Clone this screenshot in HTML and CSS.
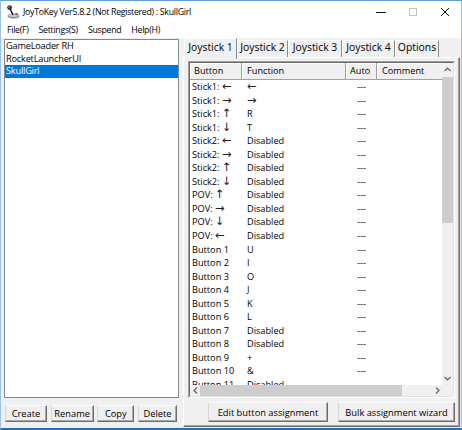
FILE: index.html
```html
<!DOCTYPE html>
<html>
<head>
<meta charset="utf-8">
<link rel="stylesheet" href="styles.css">
</head>
<body>
<div class="window">
  <div class="titlebar">
    <svg class="appicon" width="15" height="15" viewBox="0 0 15 15">
      <ellipse cx="8.5" cy="12" rx="6" ry="2.4" fill="#8a8a8a"/>
      <ellipse cx="8.5" cy="11.2" rx="5.2" ry="1.8" fill="#c9c9c9"/>
      <line x1="8" y1="11" x2="5" y2="4.5" stroke="#222" stroke-width="1.6"/>
      <circle cx="4.6" cy="3.6" r="2.4" fill="#333"/>
      <circle cx="4" cy="3" r="0.8" fill="#aaa"/>
      <rect x="10.5" y="9.3" width="2.2" height="1.4" fill="#333"/>
    </svg>
    <span class="title">JoyToKey Ver5.8.2 (Not Registered) : SkullGirl</span>
    <div class="caption">
      <span class="capbtn"><svg width="10" height="10" viewBox="0 0 10 10"><line x1="0" y1="5.5" x2="10" y2="5.5" stroke="#111" stroke-width="1"/></svg></span>
      <span class="capbtn"><svg width="10" height="10" viewBox="0 0 10 10"><rect x="1.5" y="1.5" width="7" height="7" fill="none" stroke="#c4c4c4" stroke-width="1"/></svg></span>
      <span class="capbtn"><svg width="10" height="10" viewBox="0 0 10 10"><path d="M1 1 L9 9 M9 1 L1 9" stroke="#111" stroke-width="1"/></svg></span>
    </div>
  </div>
  <div class="menubar">
    <span class="menuitem">File(F)</span>
    <span class="menuitem">Settings(S)</span>
    <span class="menuitem">Suspend</span>
    <span class="menuitem">Help(H)</span>
  </div>
  <div class="client">
    <div class="leftpane">
      <ul class="listbox">
        <li>GameLoader RH</li>
        <li>RocketLauncherUI</li>
        <li class="selected">SkullGirl</li>
      </ul>
      <div class="leftbtns">
        <button class="btn w-create">Create</button>
        <button class="btn w-rename">Rename</button>
        <button class="btn w-copy">Copy</button>
        <button class="btn w-delete">Delete</button>
      </div>
    </div>
    <div class="rightpane">
      <div class="tabs">
        <div class="tab active t1">Joystick 1</div>
        <div class="tab t2">Joystick 2</div>
        <div class="tab t3">Joystick 3</div>
        <div class="tab t4">Joystick 4</div>
        <div class="tab t5">Options</div>
      </div>
      <div class="panel">
        <div class="listview">
          <div class="lv-inner">
            <div class="lv-view">
              <div class="lv-header">
                <div class="hc c1">Button</div>
                <div class="hc c2">Function</div>
                <div class="hc c3">Auto</div>
                <div class="hc c4">Comment</div>
              </div>
              <div class="lv-rows">
                <div class="row"><span class="c1">Stick1: <span class="ar">←</span></span><span class="c2"><span class="ar">←</span></span><span class="c3">---</span></div>
                <div class="row"><span class="c1">Stick1: <span class="ar">→</span></span><span class="c2"><span class="ar">→</span></span><span class="c3">---</span></div>
                <div class="row"><span class="c1">Stick1: <span class="ar">↑</span></span><span class="c2">R</span><span class="c3">---</span></div>
                <div class="row"><span class="c1">Stick1: <span class="ar">↓</span></span><span class="c2">T</span><span class="c3">---</span></div>
                <div class="row"><span class="c1">Stick2: <span class="ar">←</span></span><span class="c2">Disabled</span><span class="c3">---</span></div>
                <div class="row"><span class="c1">Stick2: <span class="ar">→</span></span><span class="c2">Disabled</span><span class="c3">---</span></div>
                <div class="row"><span class="c1">Stick2: <span class="ar">↑</span></span><span class="c2">Disabled</span><span class="c3">---</span></div>
                <div class="row"><span class="c1">Stick2: <span class="ar">↓</span></span><span class="c2">Disabled</span><span class="c3">---</span></div>
                <div class="row"><span class="c1">POV: <span class="ar">↑</span></span><span class="c2">Disabled</span><span class="c3">---</span></div>
                <div class="row"><span class="c1">POV: <span class="ar">→</span></span><span class="c2">Disabled</span><span class="c3">---</span></div>
                <div class="row"><span class="c1">POV: <span class="ar">↓</span></span><span class="c2">Disabled</span><span class="c3">---</span></div>
                <div class="row"><span class="c1">POV: <span class="ar">←</span></span><span class="c2">Disabled</span><span class="c3">---</span></div>
                <div class="row"><span class="c1">Button 1</span><span class="c2">U</span><span class="c3">---</span></div>
                <div class="row"><span class="c1">Button 2</span><span class="c2">I</span><span class="c3">---</span></div>
                <div class="row"><span class="c1">Button 3</span><span class="c2">O</span><span class="c3">---</span></div>
                <div class="row"><span class="c1">Button 4</span><span class="c2">J</span><span class="c3">---</span></div>
                <div class="row"><span class="c1">Button 5</span><span class="c2">K</span><span class="c3">---</span></div>
                <div class="row"><span class="c1">Button 6</span><span class="c2">L</span><span class="c3">---</span></div>
                <div class="row"><span class="c1">Button 7</span><span class="c2">Disabled</span><span class="c3">---</span></div>
                <div class="row"><span class="c1">Button 8</span><span class="c2">Disabled</span><span class="c3">---</span></div>
                <div class="row"><span class="c1">Button 9</span><span class="c2">+</span><span class="c3">---</span></div>
                <div class="row"><span class="c1">Button 10</span><span class="c2">&amp;</span><span class="c3">---</span></div>
                <div class="row"><span class="c1">Button 11</span><span class="c2">Disabled</span><span class="c3">---</span></div>
              </div>
            </div>
            <div class="vscroll">
              <div class="sarrow v"><svg width="7" height="5" viewBox="0 0 7 5"><polyline points="0.5,4 3.5,1 6.5,4" fill="none" stroke="#606060" stroke-width="1.2"/></svg></div>
              <div class="vthumb"></div>
              <div class="vtrack"></div>
              <div class="sarrow v"><svg width="7" height="5" viewBox="0 0 7 5"><polyline points="0.5,1 3.5,4 6.5,1" fill="none" stroke="#606060" stroke-width="1.2"/></svg></div>
            </div>
            <div class="hscroll">
              <div class="sarrow h"><svg width="5" height="7" viewBox="0 0 5 7"><polyline points="4,0.5 1,3.5 4,6.5" fill="none" stroke="#606060" stroke-width="1.2"/></svg></div>
              <div class="hthumb"></div>
              <div class="htrack"></div>
              <div class="sarrow h"><svg width="5" height="7" viewBox="0 0 5 7"><polyline points="1,0.5 4,3.5 1,6.5" fill="none" stroke="#606060" stroke-width="1.2"/></svg></div>
            </div>
            <div class="corner"></div>
          </div>
        </div>
        <div class="panelbtns">
          <button class="btn w-edit">Edit button assignment</button>
          <button class="btn w-bulk">Bulk assignment wizard</button>
        </div>
      </div>
    </div>
  </div>
</div>
</body>
</html>
```
FILE: styles.css
```css
* { box-sizing: border-box; }
html, body { margin: 0; padding: 0; }
body {
  width: 462px;
  height: 430px;
  overflow: hidden;
  background: #fff;
  color: #000;
  font-family: "Segoe UI", "Open Sans", "DejaVu Sans", sans-serif;
}
.window {
  width: 462px;
  height: 430px;
  display: flex;
  flex-direction: column;
  border-top: 1px solid #5c9ee0;
  border-left: 1px solid #9cc0e8;
  border-right: 1px solid #9cc0e8;
  border-bottom: 2px solid #1e6fc4;
}
.titlebar {
  height: 21px;
  display: flex;
  align-items: center;
  background: #fff;
}
.appicon { margin-left: 4px; flex: none; }
.title {
  margin-left: 3px;
  font-size: 8.8px;
  letter-spacing: -0.3px;
  white-space: nowrap;
}
.caption { margin-left: auto; display: flex; height: 21px; }
.capbtn {
  width: 32px;
  height: 21px;
  display: flex;
  align-items: center;
  justify-content: center;
}
.menubar {
  height: 16px;
  display: flex;
  align-items: center;
  padding-left: 1px;
  background: #fff;
  font-size: 8.8px;
  letter-spacing: -0.3px;
}
.menuitem { padding: 0 5px; line-height: 16px; }
.client {
  flex: 1;
  display: flex;
  background: #f0f0f0;
  min-height: 0;
}
.leftpane {
  width: 182px;
  flex: none;
  display: flex;
  flex-direction: column;
  padding: 1px 4px 6px 3px;
}
.listbox {
  flex: 1;
  margin: 0;
  padding: 0;
  list-style: none;
  background: #fff;
  border: 1px solid #828790;
  font-size: 9.2px;
  letter-spacing: -0.2px;
}
.listbox li {
  height: 12.5px;
  line-height: 12.5px;
  padding-left: 1px;
  white-space: nowrap;
}
.listbox li.selected { background: #0078d7; color: #fff; }
.leftbtns {
  margin: 7px 2px 0 1px;
  height: 17px;
  display: flex;
  justify-content: space-between;
}
.btn {
  height: 100%;
  padding: 0;
  margin: 0;
  font-family: inherit;
  font-size: 9.3px;
  color: #000;
  background: #efefef;
  border: 1px solid;
  border-color: #fdfdfd #6d6d6d #6d6d6d #d8d8d8;
  box-shadow: inset -1px -1px 0 #a8a8a8;
  white-space: nowrap;
}
.w-create { width: 42px; }
.w-rename { width: 43px; }
.w-copy { width: 37px; }
.w-delete { width: 39px; }
.rightpane {
  flex: 1;
  display: flex;
  flex-direction: column;
  padding: 0 1px 1px 0;
  min-width: 0;
}
.tabs {
  height: 19px;
  display: flex;
  align-items: flex-end;
  padding-left: 1px;
  font-size: 10.4px;
}
.tab {
  height: 17px;
  line-height: 13px;
  text-align: center;
  background: #f0f0f0;
  border-top: 1px solid #fff;
  border-left: 1px solid #fff;
  border-right: 1px solid #8a8a8a;
  white-space: nowrap;
}
.tab.active {
  height: 21px;
  line-height: 14px;
  padding-top: 1px;
  margin-bottom: -2px;
  position: relative;
  z-index: 1;
}
.t1 { width: 53px; }
.t2 { width: 51px; }
.t3 { width: 54px; }
.t4 { width: 53px; }
.t5 { width: 44px; }
.panel {
  flex: 1;
  display: flex;
  flex-direction: column;
  padding: 3px 4px 4px 4px;
  border: 1px solid;
  border-color: #fff #6d6d6d #6d6d6d #fff;
  box-shadow: inset -1px -1px 0 #a0a0a0;
  min-height: 0;
}
.listview {
  flex: 1;
  min-height: 0;
  border: 1px solid;
  border-color: #a0a0a0 #fff #fff #a0a0a0;
}
.lv-inner {
  height: 100%;
  border: 1px solid;
  border-color: #696969 #e3e3e3 #e3e3e3 #696969;
  background: #fff;
  display: grid;
  grid-template-columns: 1fr 11px;
  grid-template-rows: 1fr 11px;
}
.lv-view {
  overflow: hidden;
  min-width: 0;
  min-height: 0;
}
.lv-header {
  height: 17px;
  display: flex;
  background: #f0f0f0;
  border-bottom: 1px solid #a0a0a0;
  font-size: 9.2px;
  white-space: nowrap;
}
.hc {
  line-height: 16px;
  border-right: 1px solid #a0a0a0;
  box-shadow: inset 1px 1px 0 #fff;
  padding-left: 5px;
  flex: none;
}
.hc.c1 { padding-left: 4px; }
.c1 { width: 52px; }
.c2 { width: 104px; }
.c3 { width: 31px; }
.c4 { width: 90px; }
.hc.c3 { padding-left: 4px; }
.row {
  height: 13.55px;
  line-height: 13.55px;
  display: flex;
  font-size: 9.2px;
  white-space: nowrap;
}
.row > span { flex: none; }
.row .c1 { padding-left: 2px; }
.row .c2 { padding-left: 5px; }
.row .c3 { text-align: center; }
.ar {
  font-family: "DejaVu Sans", sans-serif;
  font-size: 11.5px;
  line-height: 1;
  color: #222;
}
.vscroll {
  background: #f0f0f0;
  display: flex;
  flex-direction: column;
}
.sarrow {
  display: flex;
  align-items: center;
  justify-content: center;
  flex: none;
}
.sarrow.v { height: 13px; }
.sarrow.h { width: 10px; }
.vthumb { margin-top: 1px; height: 146px; background: #cdcdcd; flex: none; }
.vtrack { flex: 1; }
.hscroll {
  background: #f0f0f0;
  display: flex;
  min-width: 0;
}
.hthumb { width: 202px; background: #cdcdcd; flex: none; }
.htrack { flex: 1; }
.corner { background: #f0f0f0; }
.panelbtns {
  margin-top: 4px;
  height: 20px;
  display: flex;
  gap: 10px;
  padding-left: 20px;
}
.w-edit { width: 120px; }
.w-bulk { width: 117px; }
```
